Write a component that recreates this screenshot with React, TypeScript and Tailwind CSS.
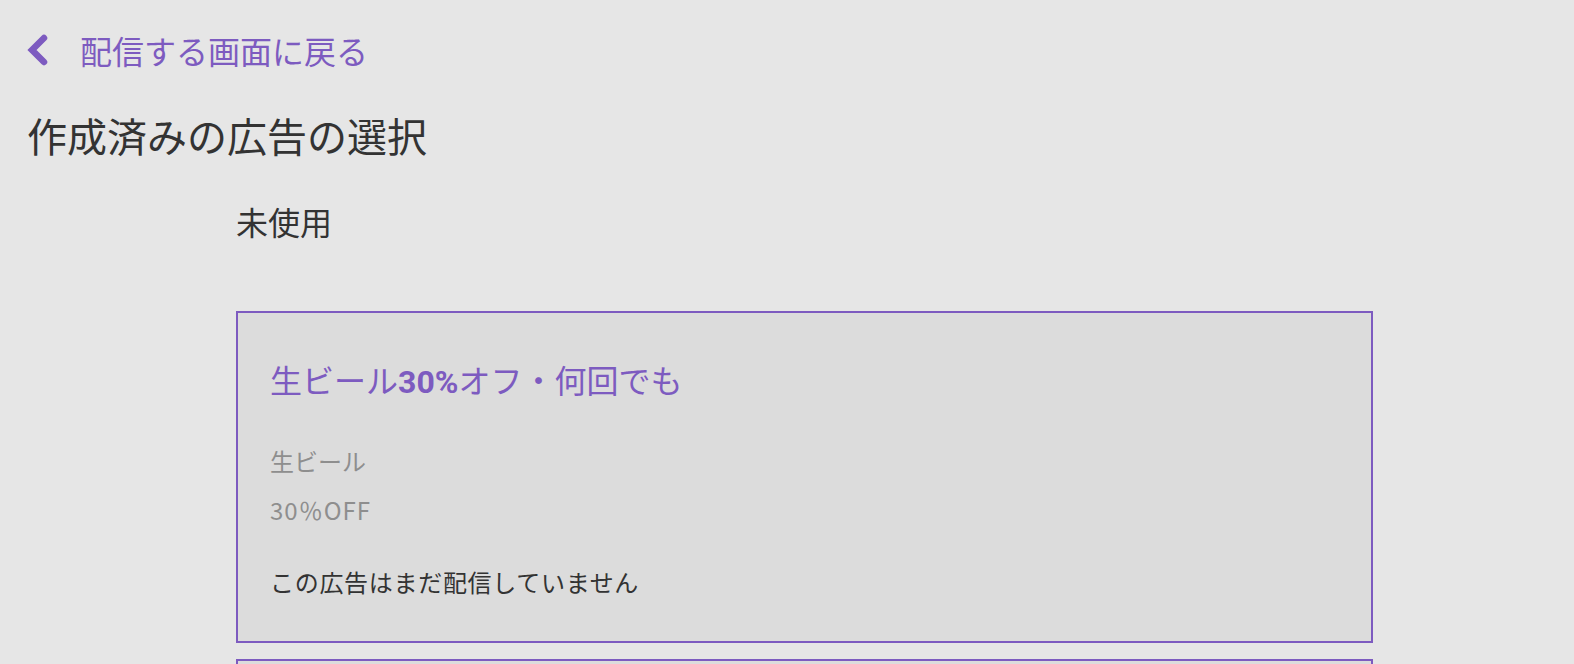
import React from "react"

const font = { fontFamily: '"Noto Sans CJK JP", "Noto Sans", sans-serif' }

interface Ad {
  id: string
  name: string
  item: string
  discount: string
  status: string
}

const ads: Ad[] = [
  {
    id: "1",
    name: "生ビール30%オフ・何回でも",
    item: "生ビール",
    discount: "30％OFF",
    status: "この広告はまだ配信していません",
  },
  {
    id: "2",
    name: "",
    item: "",
    discount: "",
    status: "",
  },
]

function ChevronLeft() {
  return (
    <svg width="22" height="32" viewBox="0 0 22 32" className="shrink-0">
      <polyline
        points="17,4 5,16 17,28"
        fill="none"
        stroke="#7d5bc0"
        strokeWidth="6.5"
        strokeLinecap="round"
        strokeLinejoin="miter"
      />
    </svg>
  )
}

function AdTitle({ name }: { name: string }) {
  // 「30%」だけ太字で表示される
  const parts = name.split(/(30%)/)
  return (
    <h3 className="text-[32px] leading-[32px] text-[#7d5bc0]">
      {parts.map((p, i) =>
        p === "30%" ? (
          <span key={i} className="font-bold" style={{ fontFamily: 'Roboto, "Noto Sans CJK JP", sans-serif' }}>
            {p}
          </span>
        ) : (
          <span key={i}>{p}</span>
        ),
      )}
    </h3>
  )
}

function AdCard({ ad }: { ad: Ad }) {
  return (
    <div className="w-[1137px] border-2 border-[#7d5bc0] bg-[#dcdcdc] pl-[32px] pr-[32px] pt-[50px] pb-[47px]">
      <AdTitle name={ad.name} />
      <p className="mt-[51px] text-[24px] leading-[24px] text-[#8e8e8e]">{ad.item}</p>
      <p className="mt-[25px] text-[24px] leading-[24px] tracking-[1px] text-[#8e8e8e]">{ad.discount}</p>
      <p className="mt-[48px] text-[24px] leading-[24px] tracking-[0.7px] text-[#333333]">{ad.status}</p>
    </div>
  )
}

export default function App() {
  return (
    <div className="h-screen overflow-hidden bg-[#e6e6e6] pl-[27px] pt-[34px]" style={font}>
      <a href="#" className="flex h-[32px] items-center gap-[31px] text-[32px] leading-[32px] text-[#7d5bc0]">
        <ChevronLeft />
        <span>配信する画面に戻る</span>
      </a>

      <h1 className="mt-[49px] text-[40px] leading-[40px] text-[#333333]">作成済みの広告の選択</h1>

      <div className="ml-[209px]">
        <h2 className="mt-[50px] text-[32px] leading-[32px] text-[#333333]">未使用</h2>

        <div className="mt-[74px] flex flex-col gap-[16px]">
          {ads.map((ad) => (
            <AdCard key={ad.id} ad={ad} />
          ))}
        </div>
      </div>
    </div>
  )
}
